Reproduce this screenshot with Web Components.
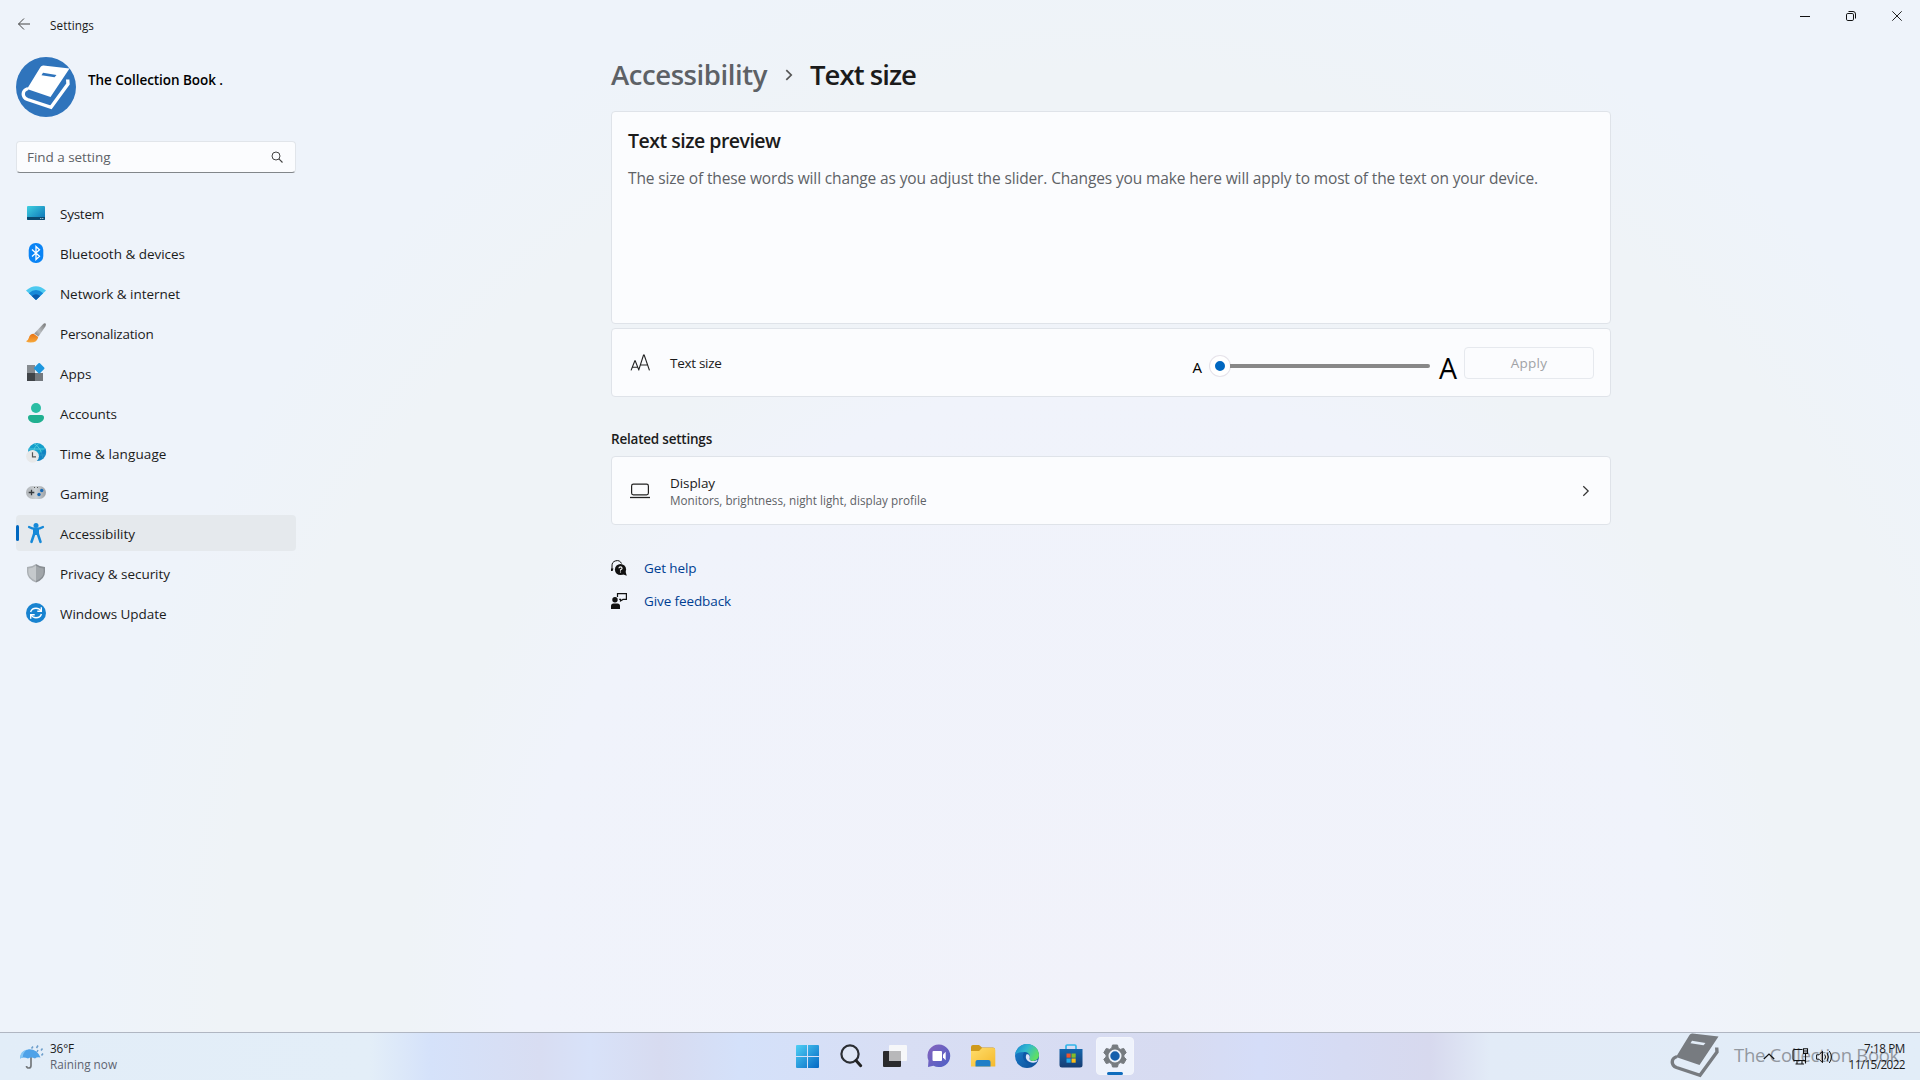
<!DOCTYPE html>
<html lang="en">
<head>
<meta charset="utf-8">
<title>Settings</title>
<style>
    html, body {
        margin: 0;
        height: 100%;
        overflow: hidden;
    }
    body {
        font-family: "Open Sans", "Noto Sans", sans-serif;
        font-size: 13.5px;
        color: #1b1b1b;
    }
</style>
</head>
<body>
<settings-desktop></settings-desktop>

<script>
// Icon markup, keyed by name: [width, height, svg content]
const ICONS = {
    back: [14, 14, `<path d="M13 7H1.5M7 1.5 1.5 7 7 12.5" fill="none" stroke="#444" stroke-width="1"/>`],
    minimize: [10, 10, `<path d="M0 5.5H10" stroke="#111"/>`],
    restore: [10, 10, `<rect x=".5" y="2.5" width="7" height="7" rx="1.3" fill="none" stroke="#111"/><path d="M2.5.5H7A2.5 2.5 0 0 1 9.5 3V7.5" fill="none" stroke="#111"/>`],
    close: [10, 10, `<path d="M.3.3 9.7 9.7M9.7.3.3 9.7" stroke="#222"/>`],
    search: [12, 12, `<circle cx="5" cy="5" r="4" fill="none" stroke="#444"/><path d="M7.9 7.9 11.5 11.5" stroke="#444" stroke-width="1.1"/>`],
    chevron: [8, 12, `<path d="M1.3 1.2 6.2 6 1.3 10.8" fill="none" stroke="currentColor" stroke-width="var(--stroke, 1.2)"/>`],
    system: [20, 20, `<defs><linearGradient id="a" x2="1" y2="1"><stop stop-color="#3fd0e0"/><stop offset="1" stop-color="#0a6fb5"/></linearGradient></defs>
        <rect x="1" y="3" width="18" height="14" rx="1" fill="url(#a)"/><path d="M1 14H19V16a1 1 0 0 1-1 1H2a1 1 0 0 1-1-1Z" fill="#0b4a70"/><path d="M14.3 15.5h1M16.3 15.5h1" stroke="#cfe8f5"/>`],
    bluetooth: [20, 20, `<rect x="2.7" y="0" width="14.6" height="20" rx="7" fill="#0a84f5"/><path d="M6 6.5 13.5 13.3 10 16.5V3.5L13.5 6.7 6 13.5" fill="none" stroke="#fff" stroke-width="1.3"/>`],
    network: [20, 20, `<path d="M0 7.5Q10-1 20 7.5L10 17Z" fill="#4cc9f0"/><path d="M2.8 10.2Q10 3.8 17.2 10.2L10 17Z" fill="#1689d8"/><path d="M5.8 13Q10 9.4 14.2 13L10 17Z" fill="#0b5cad"/>`],
    brush: [20, 20, `<defs><linearGradient id="b" x1="1" x2="0" y2="1"><stop stop-color="#777"/><stop offset=".6" stop-color="#b8bcc0"/><stop offset="1" stop-color="#777"/></linearGradient><linearGradient id="c" x2="0" y2="1"><stop stop-color="#e87416"/><stop offset="1" stop-color="#f7a93b"/></linearGradient></defs>
        <path d="M19.6.5Q20.5 1.6 19.2 3.8L12.5 13.6 8.2 10.5 16.5 1.7Q18.6-.4 19.6.5Z" fill="url(#b)"/><path d="M7.6 10.8 12.2 14Q11.5 19.5 4.5 19.5 1.5 19.5 0 18.3 2.2 17.4 2.8 15 4 10.8 7.6 10.8Z" fill="url(#c)"/>`],
    apps: [20, 20, `<rect x="1" y="2" width="8" height="8" fill="#868b90"/><rect x="1" y="10" width="8" height="8" fill="#404448"/><rect x="9" y="10" width="8" height="8" fill="#74797e"/><rect x="8.9" y="1.5" width="8" height="8" rx="1" transform="rotate(45 13.3 5.8)" fill="#1d97df"/>`],
    accounts: [20, 20, `<circle cx="10" cy="5" r="5" fill="#2abda4"/><path d="M2 14.5A2.5 2.5 0 0 1 4.5 12H15.5A2.5 2.5 0 0 1 18 14.5C18 18 14.5 20 10 20S2 18 2 14.5Z" fill="#20b090"/>`],
    time: [20, 20, `<circle cx="11" cy="9" r="9" fill="#149fcb"/><path d="M8 .6Q15 4 17 15.5M2.5 6H19.5M13 .3Q8 4 7 9M12 12H19" fill="none" stroke="#51cbdc" stroke-width="1"/><path d="M19.5 5.5A9 9 0 0 1 11 18V13Z" fill="#1173bd" opacity=".6"/><circle cx="6.5" cy="13.3" r="6.4" fill="#e7e8e9"/><path d="M6.5 9.2V13.8H10" fill="none" stroke="#555" stroke-width="1.2"/>`],
    gaming: [20, 20, `<defs><linearGradient id="d" x2="1"><stop stop-color="#b0b4b8"/><stop offset=".5" stop-color="#cdd2d6"/><stop offset="1" stop-color="#9ca1a6"/></linearGradient></defs>
        <rect x="0" y="3" width="20" height="13" rx="6.5" fill="url(#d)"/><path d="M5.5 6.7V12.3M2.7 9.5H8.3" stroke="#363a3e" stroke-width="1.3"/><circle cx="15.7" cy="7.5" r="1.7" fill="#1769b5"/><circle cx="13" cy="11.5" r="1.7" fill="#1769b5"/><path d="M8 4.5h1M11 4.5h1" stroke="#555"/>`],
    accessibility: [20, 20, `<circle cx="10" cy="2.5" r="2.5" fill="#1689d8"/><path d="M3 4Q6 5.8 10 5.8T17 4" fill="none" stroke="#1689d8" stroke-width="2.2" stroke-linecap="round"/><path d="M7 5.5H13V12H7Z" fill="#1689d8"/><path d="M8.3 10.5 5.5 18.8M11.7 10.5 14.5 18.8" stroke="#1689d8" stroke-width="2.6" stroke-linecap="round"/>`],
    privacy: [20, 20, `<path d="M10 1Q14 4 19 4V9Q19 16 10 19.5Z" fill="#898e93"/><path d="M10 1Q6 4 1 4V9Q1 16 10 19.5Z" fill="#abb0b4"/><path d="M10 2.7Q13.5 5.2 17.6 5.4V9Q17.5 14.5 10 18Z" fill="#a1a6aa"/><path d="M10 2.7Q6.5 5.2 2.4 5.4V9Q2.5 14.5 10 18Z" fill="#c5c9cc"/>`],
    update: [20, 20, `<circle cx="10" cy="10" r="10" fill="#1883d0"/><path d="M4.6 9Q5.8 5.2 10 5.2 13.3 5.2 15 8M15.4 11Q14.2 14.8 10 14.8 6.7 14.8 5 12" fill="none" stroke="#fff" stroke-width="1.4"/><path d="M15.3 4.3V8.3H11.3M4.7 15.7V11.7H8.7" fill="none" stroke="#fff" stroke-width="1.4"/>`],
    textsize: [22, 18, `<path d="M1 17.3 5 7.3H5.4L9.4 17.3M2.3 14H8.2M9 17.3 14.2 1.2H14.9L20.5 17.3M11 11.7H18.5" fill="none" stroke="#222" stroke-width="1.2"/>`],
    laptop: [20, 16, `<rect x="1.6" y="1.1" width="16.8" height="10.8" rx="1.8" fill="none" stroke="#222" stroke-width="1.2"/><path d="M0 14.5H20" stroke="#222" stroke-width="1.3"/>`],
    help: [16, 16, `<path d="M1 10.5V6A5 5 0 0 1 10.5 3.5" fill="none" stroke="#111" stroke-width="1"/><path d="M0 8.5H2.5L1.5 11H0Z" fill="#111"/><circle cx="9.5" cy="9.5" r="5.6" fill="#111"/><path d="M11 14 14.5 11.5 15.8 15.8Z" fill="#111"/><path d="M7.9 8.3Q8 6.9 9.5 6.9T11.1 8.3Q11.1 9.3 9.5 9.8V10.7M9.5 11.5V12.6" fill="none" stroke="#fff" stroke-width="1.1"/>`],
    feedback: [16, 16, `<circle cx="4" cy="6.7" r="2.7" fill="#111"/><path d="M0 16V13Q0 10.5 2.5 10.5H6.5Q9 10.5 9 13V16Z" fill="#111"/><path d="M6.5 4V.6H15.4V6.4H12L9.5 8V6.4H8.2" fill="none" stroke="#111" stroke-width="1.2"/>`],
    weather: [24, 24, `<path d="M11 12V20.5Q11 23 8.8 23T6.5 21" fill="none" stroke="#74787c" stroke-width="1.7"/><path d="M0 13.5Q1 5 9 4.2 17 4 20.5 12.5 17 11.5 15 13.5 11 11.5 8 13.5 3.5 11.5 0 13.5Z" fill="#4ea2e8"/><path d="M7 4.5Q2.5 8 2.8 12.5L0 13.5Q0 6 7 4.5Z" fill="#83c6f5"/><path d="M13 1.5 11.5 3.5M18 .5 16.5 3M22.5 3.5 21 5.5M18 5 17 7M23 8.5 21.5 10.5" stroke="#6d9ecb" stroke-width="1.5"/>`],
    start: [23, 23, `<defs><linearGradient id="e" gradientUnits="userSpaceOnUse" x2="23" y2="23"><stop stop-color="#4fd0f5"/><stop offset="1" stop-color="#0467c4"/></linearGradient></defs><path d="M0 1Q0 0 1 0H11V11H0ZM12 0H22Q23 0 23 1V11H12ZM0 12H11V23H1Q0 23 0 22ZM12 12H23V22Q23 23 22 23H12Z" fill="url(#e)"/>`],
    find: [23, 24, `<circle cx="10" cy="10" r="8.6" fill="#dfe6f5" stroke="#2b2e33" stroke-width="2.2"/><path d="M16 16.5 20.7 21.7" stroke="#222" stroke-width="3"  stroke-linecap="round"/>`],
    taskview: [24, 23, `<rect x="0" y="6" width="18" height="16" rx="1" fill="#2a2a2c"/><rect x="6" y="0" width="18" height="16" rx="1" fill="#fafafa" opacity=".9"/><path d="M6 6H18V16H6Z" fill="#b8b8ba"/>`],
    chat: [24, 24, `<defs><linearGradient id="f" x2="1" y2="1"><stop stop-color="#8663bd"/><stop offset="1" stop-color="#4c60c6"/></linearGradient></defs><path d="M12 .5A11.3 11.3 0 1 1 6.5 21.7L1 23 1.5 16.5A11.3 11.3 0 0 1 12 .5Z" fill="url(#f)"/><rect x="5.5" y="7" width="9.5" height="10" rx="1" fill="#fff"/><path d="M16 10.5 18.7 7.8V16.2L16 13.5Z" fill="#fff"/>`],
    explorer: [25, 23, `<defs><linearGradient id="g" x2="1" y2="1"><stop stop-color="#ffdd6b"/><stop offset="1" stop-color="#f5b92c"/></linearGradient></defs><path d="M0 2Q0 0 2 0H8L11 2.5H22Q24 2.5 24 4.5V8H0Z" fill="#cf9a1c"/><path d="M0 6H8L11 3H22.5Q24.3 3 24.3 5V21.5H0Z" fill="url(#g)"/><path d="M4.5 21.5V17Q4.5 15 6.5 15H17.5Q19.5 15 19.5 17V21.5Z" fill="#1f7fc7"/>`],
    edge: [24, 24, `<defs><linearGradient id="h" x2="1" y2=".5"><stop stop-color="#1687d0"/><stop offset=".5" stop-color="#31b9cf"/><stop offset="1" stop-color="#5fdf65"/></linearGradient><linearGradient id="i" x2="1" y2="1"><stop stop-color="#1b83d2"/><stop offset="1" stop-color="#0c4a93"/></linearGradient></defs>
        <circle cx="12" cy="12" r="12" fill="url(#i)"/><path d="M.3 10.5C1.5 3.5 7 0 12 0 19 0 24 5.3 24 11 24 14.5 21 17 17.5 17 14.5 17 13.8 15.8 14.5 14.5 16 11.5 13.5 8 9 8 4.5 8 1 9.5.3 10.5Z" fill="url(#h)"/><path d="M9 8.5C12.5 7.5 15.8 11 14.5 14.5 13.8 16.5 17.5 18.5 23 15.5 21 20 17 19.5 15 19.5 9 19.5 6 12 9 8.5Z" fill="#0d58a6"/><path d="M11.5 10.2C13.8 9.8 15.5 12 14.5 14.5 14 16.5 17.5 18.5 22.8 15.8L21.5 18C16 20.5 8.5 16 11.5 10.2Z" fill="#dbe3f6"/>`],
    store: [24, 24, `<defs><linearGradient id="j" x2="0" y2="1"><stop stop-color="#1566ad"/><stop offset="1" stop-color="#173d72"/></linearGradient></defs><path d="M7 5V2.2Q7 1 8.2 1H15.8Q17 1 17 2.2V5" fill="none" stroke="#33b5e9" stroke-width="1.7"/><path d="M.5 5H23.5V21Q23.5 23.5 21 23.5H3Q.5 23.5.5 21Z" fill="url(#j)"/><path d="M7.5 9.5h4.2v4.2H7.5Z" fill="#f0552c"/><path d="M12.5 9.5h4.2v4.2h-4.2Z" fill="#84bd28"/><path d="M7.5 14.5h4.2v4.2H7.5Z" fill="#27a8e8"/><path d="M12.5 14.5h4.2v4.2h-4.2Z" fill="#fbbc18"/>`],
    gear: [24, 24, `<path d="M9.5 1H14.5L15.3 4.2 17.5 5.4 20.7 4.4 23.2 8.7 20.9 11V13L23.2 15.3 20.7 19.6 17.5 18.6 15.3 19.8 14.5 23H9.5L8.7 19.8 6.5 18.6 3.3 19.6.8 15.3 3.1 13V11L.8 8.7 3.3 4.4 6.5 5.4 8.7 4.2Z" fill="#767b80" stroke="#767b80" stroke-linejoin="round"/><circle cx="12" cy="12" r="5.6" fill="#1560ac" stroke="#eef3fa" stroke-width="1.8"/>`],
    up: [12, 7, `<path d="M.8 6 6 1 11.2 6" fill="none" stroke="#111" stroke-width="1.2"/>`],
    ethernet: [17, 17, `<path d="M10.5 1.5H2.5Q1 1.5 1 3V11Q1 12.5 2.5 12.5H13M5 12.5V16M10 12.5V16M3.5 16H12M11.5.7H15.5V5.5H11.5ZM11.5 3H15.5M13.5 5.5V15.5" fill="none" stroke="#111" stroke-width="1.1"/>`],
    volume: [17, 14, `<path d="M.6 4.8H3L6.5 1.3V12.7L3 9.2H.6ZM8.7 4.5Q10.4 7 8.7 9.5M11 2.8Q13.8 7 11 11.2M13.3 1Q17.5 7 13.3 13" fill="none" stroke="#111" stroke-width="1"/>`],
    book: [60, 60, `<path d="M27.5 8.5 53.5 11.5 34.5 40 11 32 24.5 10Q25.5 8.3 27.5 8.5Z" fill="currentColor"/><path d="M12 31.5C5.5 33.5 6 40.5 11.5 42.5L35 50.3 52 27 51.7 22.5" fill="none" stroke="currentColor" stroke-width="3.4"/><path d="M27 15.8 40.5 18 38.5 20.3 25.5 18.2Z" fill="var(--gap, #2f74bc)"/>`]
};

class WinIcon extends HTMLElement {
    connectedCallback() {
        const [w, h, art] = ICONS[this.getAttribute('name')];
        const width = this.getAttribute('width') || w;
        const height = this.getAttribute('height') || h;
        this.attachShadow({ mode: 'open' });
        this.shadowRoot.innerHTML = `
            <style>
                :host { display: block; flex: none; }
                svg { display: block; overflow: visible; }
            </style>
            <svg width="${width}" height="${height}" viewBox="0 0 ${w} ${h}">${art}</svg>
        `;
    }
}

// One line of text, tracked so that it fills the given width
class UiText extends HTMLElement {
    connectedCallback() {
        this.attachShadow({ mode: 'open' });
        this.shadowRoot.innerHTML = `
            <style>
                :host { display: block; white-space: nowrap; line-height: 20px; }
                span { display: inline-block; }
            </style>
            <span><slot></slot></span>
        `;
        const span = this.shadowRoot.querySelector('span');
        const target = parseFloat(this.getAttribute('fit'));
        const count = this.textContent.length;
        if (target) {
            const natural = span.getBoundingClientRect().width;
            span.style.letterSpacing = ((target - natural) / count).toFixed(4) + 'px';
        }
    }
}

class TitleBar extends HTMLElement {
    connectedCallback() {
        this.attachShadow({ mode: 'open' });
        this.shadowRoot.innerHTML = `
            <style>
                :host { display: flex; height: 48px; justify-content: space-between; }
                .left { display: flex; align-items: center; padding-left: 17px; gap: 19px; font-size: 11.7px; }
                .left ui-text { margin-top: 2px; }
                .controls { display: flex; height: 32px; }
                .controls div { width: 46px; display: grid; place-items: center; }
            </style>
            <div class="left"><win-icon name="back"></win-icon><ui-text fit="44">Settings</ui-text></div>
            <div class="controls">
                <div><win-icon name="minimize"></win-icon></div>
                <div><win-icon name="restore"></win-icon></div>
                <div><win-icon name="close"></win-icon></div>
            </div>
        `;
    }
}

class UserCard extends HTMLElement {
    connectedCallback() {
        this.attachShadow({ mode: 'open' });
        this.shadowRoot.innerHTML = `
            <style>
                :host { display: flex; gap: 12px; height: 60px; }
                .avatar { width: 60px; height: 60px; border-radius: 50%; background: #2f74bc; color: #fff; }
                ui-text { margin-top: 13px; font-weight: 600; color: #000; }
            </style>
            <div class="avatar"><win-icon name="book"></win-icon></div>
            <ui-text fit="135">The Collection Book .</ui-text>
        `;
    }
}

class SearchBox extends HTMLElement {
    connectedCallback() {
        this.attachShadow({ mode: 'open' });
        this.shadowRoot.innerHTML = `
            <style>
                :host {
                    display: flex;
                    align-items: center;
                    justify-content: space-between;
                    box-sizing: border-box;
                    height: 32px;
                    padding: 0 12px 0 10px;
                    border: 1px solid #e1e5ea;
                    border-bottom: 1px solid #82868a;
                    border-radius: 4px;
                    background: #fbfcfe;
                    color: #5e6267;
                }
            </style>
            <ui-text fit="83.5">Find a setting</ui-text>
            <win-icon name="search"></win-icon>
        `;
    }
}

class NavItem extends HTMLElement {
    connectedCallback() {
        this.attachShadow({ mode: 'open' });
        this.shadowRoot.innerHTML = `
            <style>
                :host {
                    display: flex;
                    align-items: center;
                    height: 36px;
                    border-radius: 4px;
                }
                :host([active]) { background: #e5e9ed; }
                .bar { width: 3px; height: 16px; border-radius: 2px; margin-right: 7px; }
                :host([active]) .bar { background: #0067c0; }
                ui-text { margin: 2px 0 0 14px; }
            </style>
            <div class="bar"></div>
            <win-icon name="${this.getAttribute('icon')}"></win-icon>
            <ui-text fit="${this.getAttribute('fit')}">${this.getAttribute('label')}</ui-text>
        `;
    }
}

class SettingsSidebar extends HTMLElement {
    connectedCallback() {
        this.attachShadow({ mode: 'open' });
        this.shadowRoot.innerHTML = `
            <style>
                :host { display: block; width: 280px; padding: 9px 0 0 16px; }
                search-box { margin: 24px 0 22px; }
                nav { display: grid; gap: 4px; }
            </style>
            <user-card></user-card>
            <search-box></search-box>
            <nav>
                <nav-item icon="system" fit="44" label="System"></nav-item>
                <nav-item icon="bluetooth" fit="125" label="Bluetooth &amp; devices"></nav-item>
                <nav-item icon="network" fit="120" label="Network &amp; internet"></nav-item>
                <nav-item icon="brush" fit="93.5" label="Personalization"></nav-item>
                <nav-item icon="apps" fit="31.5" label="Apps"></nav-item>
                <nav-item icon="accounts" fit="57" label="Accounts"></nav-item>
                <nav-item icon="time" fit="106.5" label="Time &amp; language"></nav-item>
                <nav-item icon="gaming" fit="48.5" label="Gaming"></nav-item>
                <nav-item icon="accessibility" fit="75" label="Accessibility" active></nav-item>
                <nav-item icon="privacy" fit="110" label="Privacy &amp; security"></nav-item>
                <nav-item icon="update" fit="106.5" label="Windows Update"></nav-item>
            </nav>
        `;
    }
}

class SettingsCard extends HTMLElement {
    connectedCallback() {
        this.attachShadow({ mode: 'open' });
        this.shadowRoot.innerHTML = `
            <style>
                :host {
                    display: flex;
                    box-sizing: border-box;
                    align-items: center;
                    height: 69px;
                    padding: 0 16px 0 18px;
                    border: 1px solid #dfe3e9;
                    border-radius: 4px;
                    background: #fbfcfe;
                }
                .text { flex: 1; }
            </style>
            <slot name="icon"></slot>
            <div class="text"><slot></slot></div>
            <slot name="action"></slot>
        `;
    }
}

class SizeSlider extends HTMLElement {
    connectedCallback() {
        this.attachShadow({ mode: 'open' });
        this.shadowRoot.innerHTML = `
            <style>
                :host { display: flex; align-items: center; height: 32px; color: #000; }
                .small { font-size: 15px; margin-top: 8px; }
                .big { font-size: 28.5px; margin: 10px 0 0 9px; line-height: 32px; }
                .thumb {
                    box-sizing: border-box;
                    width: 20px;
                    height: 20px;
                    border: 5px solid #fff;
                    border-radius: 50%;
                    background: #0067c0;
                    box-shadow: 0 0 0 1px #e6e3ea;
                    margin: 6px 0 0 8px;
                }
                .track { width: 200px; height: 4px; border-radius: 0 2px 2px 0; background: #888; margin-top: 6px; }
            </style>
            <ui-text class="small" fit="9.5">A</ui-text>
            <div class="thumb"></div>
            <div class="track"></div>
            <ui-text class="big" fit="17">A</ui-text>
        `;
    }
}

class HelpLink extends HTMLElement {
    connectedCallback() {
        this.attachShadow({ mode: 'open' });
        this.shadowRoot.innerHTML = `
            <style>
                :host { display: flex; align-items: center; gap: 17px; height: 20px; color: #003e92; }
            </style>
            <win-icon name="${this.getAttribute('icon')}"></win-icon>
            <ui-text fit="${this.getAttribute('fit')}">${this.getAttribute('label')}</ui-text>
        `;
    }
}

class TextSizePage extends HTMLElement {
    connectedCallback() {
        this.attachShadow({ mode: 'open' });
        this.shadowRoot.innerHTML = `
            <style>
                :host { display: block; width: 1000px; padding-top: 8px; }
                h1, h2, h3, p { margin: 0; font: inherit; }
                .crumbs { display: flex; align-items: center; height: 36px; font-size: 27.5px; font-weight: 600; }
                .crumbs ui-text { line-height: 36px; padding-top: 2px; }
                .crumbs h1:first-child { color: #5d6166; }
                .crumbs win-icon { margin: 2px 17px 0 18px; color: #555; --stroke: 1.7; }
                .preview { height: 213px; margin: 19px 0 4px; align-items: flex-start; padding: 15px 16px; }
                .preview h2 ui-text { font-size: 19.5px; font-weight: 600; line-height: 28px; margin-bottom: 11px; }
                .preview p ui-text { font-size: 15.5px; line-height: 24px; color: #5e6266; }
                .icon { margin-right: 19px; }
                .laptop { margin-right: 20px; width: 20px; }
                .action { display: flex; align-items: center; gap: 8px; }
                .apply {
                    box-sizing: border-box;
                    width: 130px;
                    height: 32px;
                    border: 1px solid #e6e9ee;
                    border-radius: 4px;
                    display: grid;
                    place-items: center;
                    color: #a0a2a5;
                }
                .related { font-weight: 600; margin: 32px 0 7px; }
                .sub { font-size: 11.7px; line-height: 16px; color: #5e6266; margin-top: -1px; }
                .go { color: #333; margin-right: 4px; }
                .links { display: grid; gap: 13px; margin-top: 33px; }
            </style>
            <div class="crumbs">
                <h1><ui-text fit="156">Accessibility</ui-text></h1>
                <win-icon name="chevron"></win-icon>
                <h1><ui-text fit="106">Text size</ui-text></h1>
            </div>
            <settings-card class="preview">
                <h2><ui-text fit="152.5">Text size preview</ui-text></h2>
                <p><ui-text fit="910">The size of these words will change as you adjust the slider. Changes you make here will apply to most of the text on your device.</ui-text></p>
            </settings-card>
            <settings-card>
                <win-icon slot="icon" class="icon" name="textsize" width="21" height="17"></win-icon>
                <ui-text fit="51.5">Text size</ui-text>
                <div slot="action" class="action">
                    <size-slider></size-slider>
                    <div class="apply"><ui-text fit="36.5">Apply</ui-text></div>
                </div>
            </settings-card>
            <h3 class="related"><ui-text fit="101">Related settings</ui-text></h3>
            <settings-card>
                <win-icon slot="icon" class="laptop" name="laptop"></win-icon>
                <ui-text fit="45">Display</ui-text>
                <ui-text class="sub" fit="256.5">Monitors, brightness, night light, display profile</ui-text>
                <win-icon slot="action" class="go" name="chevron"></win-icon>
            </settings-card>
            <div class="links">
                <help-link icon="help" fit="52.5" label="Get help"></help-link>
                <help-link icon="feedback" fit="87" label="Give feedback"></help-link>
            </div>
        `;
    }
}

class TaskBar extends HTMLElement {
    connectedCallback() {
        this.attachShadow({ mode: 'open' });
        this.shadowRoot.innerHTML = `
            <style>
                :host {
                    display: grid;
                    grid-template-columns: 1fr auto 1fr;
                    box-sizing: border-box;
                    height: 48px;
                    border-top: 1px solid #b0b6c2;
                    background: linear-gradient(90deg, #e2edf8 0, #e3eef8 370px, #d5e2fa 430px, #d8ddf2 540px, #d8e2f9 590px, #d7dbf0 660px, #d4e1fa 740px, #d8def4 900px, #d7dbf1 1180px, #d5ddf8 1260px, #d7d9ee 1430px, #e2ebf7 1490px, #e2edf8 100%);
                    font-size: 11.7px;
                    position: relative;
                }
                ui-text { line-height: 16px; }
                .weather { display: flex; align-items: center; gap: 6px; padding-left: 20px; }
                .weather div { margin-top: -2px; }
                .weather ui-text:last-child { color: #5d6470; }
                .apps { display: flex; align-items: center; gap: 4px; margin-left: 1px; padding-bottom: 1px; }
                .apps div { width: 40px; height: 38px; display: grid; place-items: center; border-radius: 4px; box-sizing: border-box; }
                .apps .open { background: #eff3fc; border: 1px solid #f3f5fb; position: relative; width: 38px; margin-left: 1px; }
                .open::after {
                    content: "";
                    position: absolute;
                    left: 10px;
                    bottom: -1px;
                    width: 16px;
                    height: 3px;
                    border-radius: 2px;
                    background: #0f6cbd;
                }
                .tray { display: flex; justify-content: flex-end; align-items: center; padding-right: 15px; }
                .tray > * { z-index: 1; }
                .up { margin-right: 17px; }
                .net { margin-right: 7px; }
                .clock { display: grid; justify-items: end; width: 58px; margin: -2px 0 0 14px; }
                .watermark {
                    position: absolute;
                    left: 1665px;
                    top: -8px;
                    display: flex;
                    align-items: center;
                    gap: 9px;
                    color: #777b80;
                    --gap: #e3edf8;
                }
                .watermark ui-text { font-size: 18.5px; line-height: 24px; color: #9298a0; margin-top: -1px; }
            </style>
            <div class="weather">
                <win-icon name="weather"></win-icon>
                <div><ui-text fit="24">36°F</ui-text><ui-text fit="67">Raining now</ui-text></div>
            </div>
            <div class="apps">
                <div><win-icon name="start"></win-icon></div>
                <div><win-icon name="find"></win-icon></div>
                <div><win-icon name="taskview"></win-icon></div>
                <div><win-icon name="chat"></win-icon></div>
                <div><win-icon name="explorer"></win-icon></div>
                <div><win-icon name="edge"></win-icon></div>
                <div><win-icon name="store"></win-icon></div>
                <div class="open"><win-icon name="gear"></win-icon></div>
            </div>
            <div class="watermark">
                <win-icon name="book"></win-icon>
                <ui-text fit="165">The Collection Book</ui-text>
            </div>
            <div class="tray">
                <win-icon class="up" name="up"></win-icon>
                <win-icon class="net" name="ethernet"></win-icon>
                <win-icon name="volume"></win-icon>
                <div class="clock"><ui-text fit="41">7:18 PM</ui-text><ui-text fit="56.5">11/15/2022</ui-text></div>
            </div>
        `;
    }
}

class SettingsDesktop extends HTMLElement {
    connectedCallback() {
        this.attachShadow({ mode: 'open' });
        this.shadowRoot.innerHTML = `
            <style>
                :host {
                    display: grid;
                    grid-template-rows: 48px 1fr 48px;
                    width: 100%;
                    height: 100vh;
                    background: radial-gradient(ellipse 1120px 1190px at 1100px 1000px,
                        #f1f2fa 0, #f0f3fb 52%, #eff3f7 62%, #eff3f7 78%, #eef3fa 90%);
                }
                main { display: flex; gap: 315px; }
            </style>
            <title-bar></title-bar>
            <main>
                <settings-sidebar></settings-sidebar>
                <text-size-page></text-size-page>
            </main>
            <task-bar></task-bar>
        `;
    }
}

customElements.define('win-icon', WinIcon);
customElements.define('ui-text', UiText);
customElements.define('title-bar', TitleBar);
customElements.define('user-card', UserCard);
customElements.define('search-box', SearchBox);
customElements.define('nav-item', NavItem);
customElements.define('settings-sidebar', SettingsSidebar);
customElements.define('settings-card', SettingsCard);
customElements.define('size-slider', SizeSlider);
customElements.define('help-link', HelpLink);
customElements.define('text-size-page', TextSizePage);
customElements.define('task-bar', TaskBar);
customElements.define('settings-desktop', SettingsDesktop);
</script>
</body>
</html>
